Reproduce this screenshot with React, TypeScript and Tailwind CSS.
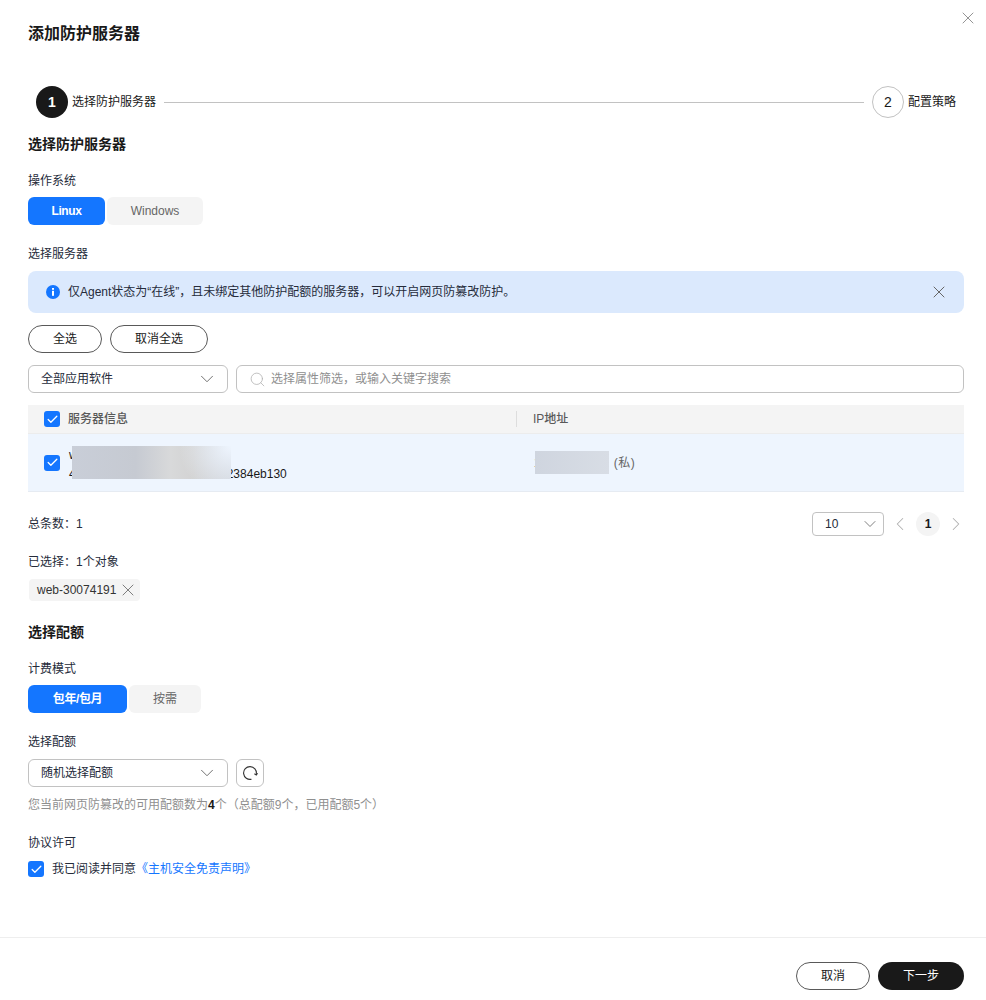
import React from 'react';
import { ChevronDown, ChevronLeft, ChevronRight, Search, X, Check } from 'lucide-react';

const FONT = "font-['Liberation_Sans','Noto_Sans_CJK_SC',sans-serif]";

const Box: React.FC = () => (
  <span className="w-4 h-4 bg-[#1476ff] rounded-[3px] flex items-center justify-center shrink-0">
    <Check size={13} strokeWidth={2.4} className="text-white" />
  </span>
);

const Label: React.FC<{ text: string; className: string }> = ({ text, className }) => (
  <p className={`text-xs leading-4 text-[#252b3a] ${className}`}>{text}</p>
);

const SectionTitle: React.FC<{ text: string; className: string }> = ({ text, className }) => (
  <h2 className={`text-sm leading-5 font-bold text-[#191919] ${className}`}>{text}</h2>
);

const Toggle: React.FC<{ left: string; right: string; leftW: string; rightW: string; className: string }> = ({ left, right, leftW, rightW, className }) => (
  <div className={`flex gap-0.5 text-xs ${className}`}>
    <button className={`h-7 ${leftW} bg-[#1476ff] text-white font-bold tracking-[-0.4px] rounded-md`}>{left}</button>
    <button className={`h-7 ${rightW} bg-[#f4f4f4] text-[#666666] rounded-md`}>{right}</button>
  </div>
);

const Select: React.FC<{ text: string }> = ({ text }) => (
  <div className="w-[200px] h-7 border border-[#c2c2c2] rounded-md flex items-center justify-between pl-3 pr-[9px] text-xs text-[#252b3a] shrink-0">
    <span>{text}</span>
    <ChevronDown size={22} strokeWidth={1} className="text-[#666666]" />
  </div>
);

export default function App() {
  return (
    <div className={`relative w-[986px] h-[1000px] bg-white overflow-hidden flex flex-col ${FONT}`}>
      <button className="absolute left-[958px] top-[8px] text-[#8a8a8a]">
        <X size={20} strokeWidth={1.1} />
      </button>

      <div className="flex-1 pl-7 pr-[22px]">
        <h1 className="mt-[23px] text-base leading-[22px] font-bold text-[#191919]">添加防护服务器</h1>

        {/* Steps */}
        <div className="flex items-center mt-[41px] ml-2 mr-2 text-xs text-[#191919]">
          <span className="w-8 h-8 rounded-full bg-[#191919] text-white text-sm font-bold flex items-center justify-center">1</span>
          <span className="ml-1">选择防护服务器</span>
          <span className="flex-1 h-px bg-[#c2c2c2] mx-2" />
          <span className="w-8 h-8 rounded-full border border-[#c2c2c2] text-sm flex items-center justify-center">2</span>
          <span className="ml-1">配置策略</span>
        </div>

        <SectionTitle text="选择防护服务器" className="mt-4" />
        <Label text="操作系统" className="mt-[19px]" />
        <Toggle left="Linux" right="Windows" leftW="w-[77px]" rightW="w-24" className="mt-2" />

        <Label text="选择服务器" className="mt-[21px]" />
        <div className="mt-[9px] h-[42px] bg-[#dbe9fd] rounded-lg flex items-center pl-[18px] pr-[15px] text-xs text-[#252b3a]">
          <svg width="14" height="14" viewBox="0 0 14 14" className="shrink-0">
            <circle cx="7" cy="7" r="7" fill="#1476ff" />
            <rect x="6" y="5.8" width="2" height="5" fill="#fff" />
            <rect x="6" y="3" width="2" height="1.8" fill="#fff" />
          </svg>
          <span className="ml-2 flex-1">仅Agent状态为“在线”，且未绑定其他防护配额的服务器，可以开启网页防篡改防护。</span>
          <X size={20} strokeWidth={1.2} className="text-[#666666]" />
        </div>

        <div className="flex gap-2 mt-3 text-xs text-[#191919]">
          <button className="w-[74px] h-7 border border-[#595959] rounded-full">全选</button>
          <button className="w-[98px] h-7 border border-[#595959] rounded-full">取消全选</button>
        </div>

        <div className="flex gap-2 mt-3">
          <Select text="全部应用软件" />
          <div className="flex-1 h-7 border border-[#c2c2c2] rounded-md flex items-center pl-[12px] text-xs text-[#8f8f8f]">
            <Search size={17} strokeWidth={1.1} className="text-[#b0b0b0]" />
            <span className="ml-[5px]">选择属性筛选，或输入关键字搜索</span>
          </div>
        </div>

        {/* Table */}
        <div className="mt-3 text-xs">
          <div className="h-[29px] bg-[#f4f4f4] border-b border-[#ececec] flex items-center text-[#595959] font-medium">
            <div className="w-[488px] pl-4 flex items-center">
              <Box />
              <span className="ml-2">服务器信息</span>
            </div>
            <div className="border-l border-[#dddddd] h-4 pl-4 leading-4">IP地址</div>
          </div>
          <div className="h-[58px] bg-[#eef5fe] border-b border-[#e6ebf2] flex items-center">
            <div className="w-[488px] pl-4 flex items-center relative">
              <Box />
              <div className="ml-[9px] pt-1 leading-[19px] text-[#191919] text-xs">
                <p>w</p>
                <p>4<span className="ml-[151px]">2384eb130</span></p>
              </div>
              <div className="absolute left-[44px] top-[4px] w-[159px] h-[33px] bg-[radial-gradient(circle_at_100%_0%,#eef5fe_0%,transparent_32%),linear-gradient(90deg,#c9ced8_0%,#c6cad2_40%,#d8d9da_62%,#d3d3d3_76%,#cdd1d8_100%)]" />
            </div>
            <div className="pl-[18px] flex items-center relative">
              <span className="text-[#191919]">1</span>
              <span className="w-[74px] h-[23px] bg-gradient-to-r from-[#cfd5df] to-[#d8dde5] -ml-[6px]" />
              <span className="ml-[5px] text-[#666666] tracking-[0.5px]">(私)</span>
            </div>
          </div>
        </div>

        {/* Pagination */}
        <div className="flex items-center justify-between mt-5 text-xs text-[#252b3a]">
          <span>总条数：1</span>
          <div className="flex items-center -mr-[3px]">
            <div className="w-[72px] h-6 border border-[#c2c2c2] rounded flex items-center justify-between pl-3 pr-[3px]">
              <span>10</span>
              <ChevronDown size={20} strokeWidth={1} className="text-[#666666]" />
            </div>
            <ChevronLeft size={22} strokeWidth={1.1} className="text-[#b0b0b0] ml-[5px]" />
            <span className="w-6 h-6 rounded-full bg-[#f4f4f4] font-bold text-[#191919] flex items-center justify-center ml-[5px]">1</span>
            <ChevronRight size={22} strokeWidth={1.1} className="text-[#b0b0b0] ml-[5px]" />
          </div>
        </div>

        <Label text="已选择：1个对象" className="mt-[18px]" />
        <div className="ml-px mt-[9px] w-[111px] h-[22px] bg-[#f4f4f4] rounded flex items-center pl-2 text-xs text-[#333333]">
          <span>web-30074191</span>
          <X size={20} strokeWidth={1} className="ml-[2px] text-[#666666]" />
        </div>

        <SectionTitle text="选择配额" className="mt-[21px]" />
        <Label text="计费模式" className="mt-[19px]" />
        <Toggle left="包年/包月" right="按需" leftW="w-[99px]" rightW="w-[72px]" className="mt-2" />

        <Label text="选择配额" className="mt-[21px]" />
        <div className="flex gap-2 mt-[9px]">
          <Select text="随机选择配额" />
          <div className="w-7 h-7 border border-[#c2c2c2] rounded-md flex items-center justify-center">
            <svg width="16" height="16" viewBox="0 0 16 16" fill="none" stroke="#333333" strokeWidth="1.1">
              <path d="M14.3 9A6.4 6.4 0 1 0 9.5 14.2" />
              <path d="M15.6 8.2L14.3 10L12.4 8.8" />
            </svg>
          </div>
        </div>
        <p className="mt-[10px] text-xs leading-4 text-[#8f8f8f]">
          您当前网页防篡改的可用配额数为<span className="font-bold text-[#191919]">4</span>个（总配额9个，已用配额5个）
        </p>

        <Label text="协议许可" className="mt-[22px]" />
        <div className="flex items-center mt-[10px] text-xs text-[#252b3a]">
          <Box />
          <span className="ml-2">我已阅读并同意</span>
          <a className="text-[#1476ff]">《主机安全免责声明》</a>
        </div>
      </div>

      {/* Footer */}
      <div className="h-[63px] border-t border-[#eeeeee] flex justify-end items-start gap-2 px-[22px] pt-6 text-xs">
        <button className="w-[74px] h-7 border border-[#595959] rounded-full text-[#191919]">取消</button>
        <button className="w-[86px] h-7 bg-[#191919] rounded-full text-white">下一步</button>
      </div>
    </div>
  );
}
